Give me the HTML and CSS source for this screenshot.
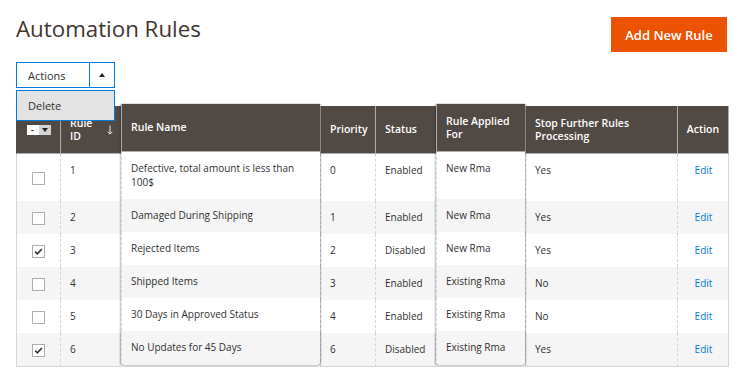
FILE: index.html
```html
<!DOCTYPE html>
<html lang="en">
<head>
    <meta charset="UTF-8"/>
    <title>Automation Rules</title>
    <link rel="stylesheet" href="styles.css">
</head>
<body>
<div class="page">
    <div class="page-head">
        <h1 class="page-title">Automation Rules</h1>
        <button class="btn-primary">Add New Rule</button>
    </div>

    <div class="mass-actions">
        <div class="action-select">
            <span class="action-label">Actions</span>
            <span class="action-toggle"><span class="arrow-up"></span></span>
        </div>
        <ul class="action-menu">
            <li>Delete</li>
        </ul>
    </div>

    <table class="data-grid">
        <colgroup>
            <col class="w-check">
            <col class="w-id">
            <col class="w-name">
            <col class="w-priority">
            <col class="w-status">
            <col class="w-applied">
            <col class="w-stop">
            <col class="w-action">
        </colgroup>
        <thead>
        <tr>
            <th class="col-check">
                <span class="multicheck"><span class="mc-box">-</span><span class="mc-toggle"><span class="arrow-down"></span></span></span>
            </th>
            <th class="col-id">
                <div class="th-sort">
                    <span class="th-label">Rule ID</span>
                    <svg class="sort-arrow" width="6" height="10" viewBox="0 0 6 10">
                        <path d="M3 0.5V9M0.8 6.6L3 9.2L5.2 6.6" fill="none" stroke="#e8e8e8" stroke-width="1"/>
                    </svg>
                </div>
            </th>
            <th class="lifted">Rule Name</th>
            <th class="nowrap">Priority</th>
            <th class="nowrap">Status</th>
            <th class="lifted">Rule Applied For</th>
            <th>Stop Further Rules Processing</th>
            <th class="nowrap center">Action</th>
        </tr>
        </thead>
        <tbody>
        <tr>
            <td><span class="cb"></span></td>
            <td>1</td>
            <td class="lifted">Defective, total amount is less than 100$</td>
            <td>0</td>
            <td>Enabled</td>
            <td class="lifted">New Rma</td>
            <td>Yes</td>
            <td><a href="#" class="link">Edit</a></td>
        </tr>
        <tr>
            <td><span class="cb"></span></td>
            <td>2</td>
            <td class="lifted">Damaged During Shipping</td>
            <td>1</td>
            <td>Enabled</td>
            <td class="lifted">New Rma</td>
            <td>Yes</td>
            <td><a href="#" class="link">Edit</a></td>
        </tr>
        <tr>
            <td><span class="cb"><svg width="11" height="11" viewBox="0 0 11 11"><path d="M2.2 5.6L4.4 7.8L8.8 3" fill="none" stroke="#303030" stroke-width="1.6"/></svg></span></td>
            <td>3</td>
            <td class="lifted">Rejected Items</td>
            <td>2</td>
            <td>Disabled</td>
            <td class="lifted">New Rma</td>
            <td>Yes</td>
            <td><a href="#" class="link">Edit</a></td>
        </tr>
        <tr>
            <td><span class="cb"></span></td>
            <td>4</td>
            <td class="lifted">Shipped Items</td>
            <td>3</td>
            <td>Enabled</td>
            <td class="lifted">Existing Rma</td>
            <td>No</td>
            <td><a href="#" class="link">Edit</a></td>
        </tr>
        <tr>
            <td><span class="cb"></span></td>
            <td>5</td>
            <td class="lifted">30 Days in Approved Status</td>
            <td>4</td>
            <td>Enabled</td>
            <td class="lifted">Existing Rma</td>
            <td>No</td>
            <td><a href="#" class="link">Edit</a></td>
        </tr>
        <tr>
            <td><span class="cb"><svg width="11" height="11" viewBox="0 0 11 11"><path d="M2.2 5.6L4.4 7.8L8.8 3" fill="none" stroke="#303030" stroke-width="1.6"/></svg></span></td>
            <td>6</td>
            <td class="lifted">No Updates for 45 Days</td>
            <td>6</td>
            <td>Disabled</td>
            <td class="lifted">Existing Rma</td>
            <td>Yes</td>
            <td><a href="#" class="link">Edit</a></td>
        </tr>
        </tbody>
    </table>
</div>
</body>
</html>
```

FILE: styles.css
```css
body {
    margin: 0;
    font-family: "Open Sans", "Noto Sans", sans-serif;
    color: #303030;
    background: #fff;
}

.page {
    padding: 14px 18px 0 16px;
}

.page-head {
    display: flex;
    justify-content: space-between;
    align-items: flex-start;
}

.page-title {
    margin: 0;
    font-size: 22.3px;
    font-weight: 400;
    line-height: 29px;
    color: #41362f;
}

.btn-primary {
    margin: 3px 2px 0 0;
    width: 116px;
    height: 35px;
    padding: 0;
    border: 0;
    background: #eb5202;
    color: #fff;
    font-family: "Open Sans", sans-serif;
    font-size: 13px;
    font-weight: 600;
}

/* mass actions dropdown */
.mass-actions {
    position: relative;
    width: 99px;
    margin-top: 10px;
}

.action-select {
    display: flex;
    height: 26px;
    box-sizing: border-box;
    border: 1px solid #007bdb;
    font-size: 11px;
}

.action-label {
    flex: 1;
    display: flex;
    align-items: center;
    padding-left: 11px;
    border-right: 1px solid #007bdb;
}

.action-toggle {
    width: 24px;
    display: flex;
    align-items: center;
    justify-content: center;
}

.arrow-up {
    width: 0;
    height: 0;
    border-left: 3px solid transparent;
    border-right: 3px solid transparent;
    border-bottom: 4px solid #202020;
}

.action-menu {
    position: absolute;
    top: 28px;
    left: 0;
    right: 0;
    margin: 0;
    padding: 0;
    list-style: none;
    background: #e3e3e3;
    border: 1px solid #007bdb;
    z-index: 5;
}

.action-menu li {
    padding: 0 11px;
    line-height: 29px;
    font-size: 11px;
}

/* grid */
.data-grid {
    margin-top: 18px;
    width: 713px;
    table-layout: fixed;
    border-collapse: separate;
    border-spacing: 0;
}

.w-check { width: 44px; }
.w-id { width: 61px; }
.w-name { width: 199px; }
.w-priority { width: 55px; }
.w-status { width: 61px; }
.w-applied { width: 89px; }
.w-stop { width: 152px; }
.w-action { width: 52px; }

.data-grid th {
    background: #514943;
    color: #fff;
    font-size: 10.5px;
    font-weight: 600;
    line-height: 12.5px;
    text-align: left;
    vertical-align: middle;
    padding: 11px 7px 11px 9px;
    border-left: 1px solid #adadad;
    border-bottom: 1px solid #adadad;
}

.data-grid th:first-child {
    border-left-color: #514943;
    text-align: center;
    padding: 0;
}

.data-grid th:last-child {
    border-right: 1px solid #adadad;
}

.data-grid th.nowrap {
    white-space: nowrap;
}

.data-grid th.center {
    text-align: center;
    padding-left: 7px;
}

.th-sort {
    display: flex;
    align-items: center;
    justify-content: space-between;
}

.th-label {
    width: 28px;
}

.sort-arrow {
    margin-right: 1px;
}

.multicheck {
    display: inline-flex;
    height: 10px;
    vertical-align: middle;
}

.mc-box {
    width: 12px;
    background: #fff;
    color: #303030;
    font-size: 9px;
    line-height: 9px;
    font-weight: 700;
    text-align: center;
}

.mc-toggle {
    width: 12px;
    background: #d4d4d4;
    display: flex;
    align-items: center;
    justify-content: center;
}

.arrow-down {
    width: 0;
    height: 0;
    border-left: 3px solid transparent;
    border-right: 3px solid transparent;
    border-top: 4px solid #202020;
}

.data-grid td {
    padding: 9px 8px 10px 9px;
    font-size: 10px;
    line-height: 14px;
    vertical-align: top;
    background: #fff;
    border-left: 1px dashed #d6d6d6;
}

.data-grid tbody tr:nth-child(even) td {
    background: #f5f5f5;
}

.data-grid td:first-child {
    border-left: 1px solid #d6d6d6;
    text-align: center;
    vertical-align: middle;
    padding: 0;
}

.data-grid td:last-child {
    border-right: 1px solid #d6d6d6;
    text-align: center;
}

.data-grid tbody tr:last-child td {
    border-bottom: 1px solid #d6d6d6;
}

/* columns picked up for dragging */
.data-grid .lifted {
    transform: translateY(-2px);
    box-shadow: -1px 0 0 rgba(0, 0, 0, 0.14), -2px 0 0 rgba(0, 0, 0, 0.06),
                1px 0 0 rgba(0, 0, 0, 0.14), 2px 0 0 rgba(0, 0, 0, 0.06);
}

.data-grid th.lifted {
    box-shadow: -1px 0 0 rgba(0, 0, 0, 0.14), -2px 0 0 rgba(0, 0, 0, 0.06),
                1px 0 0 rgba(0, 0, 0, 0.14), 2px 0 0 rgba(0, 0, 0, 0.06),
                0 -1px 0 rgba(0, 0, 0, 0.12);
}

.data-grid tbody tr:last-child td.lifted {
    border-bottom: 0;
    border-radius: 0 0 3px 3px;
    box-shadow: -1px 0 0 rgba(0, 0, 0, 0.14), -2px 0 0 rgba(0, 0, 0, 0.06),
                1px 0 0 rgba(0, 0, 0, 0.14), 2px 0 0 rgba(0, 0, 0, 0.06),
                0 2px 3px rgba(0, 0, 0, 0.25);
}

.cb {
    display: inline-block;
    width: 13px;
    height: 13px;
    box-sizing: border-box;
    border: 1px solid #adadad;
    background: #fff;
    vertical-align: middle;
}

.cb svg {
    display: block;
}

.link {
    color: #007bdb;
    text-decoration: none;
}
```
